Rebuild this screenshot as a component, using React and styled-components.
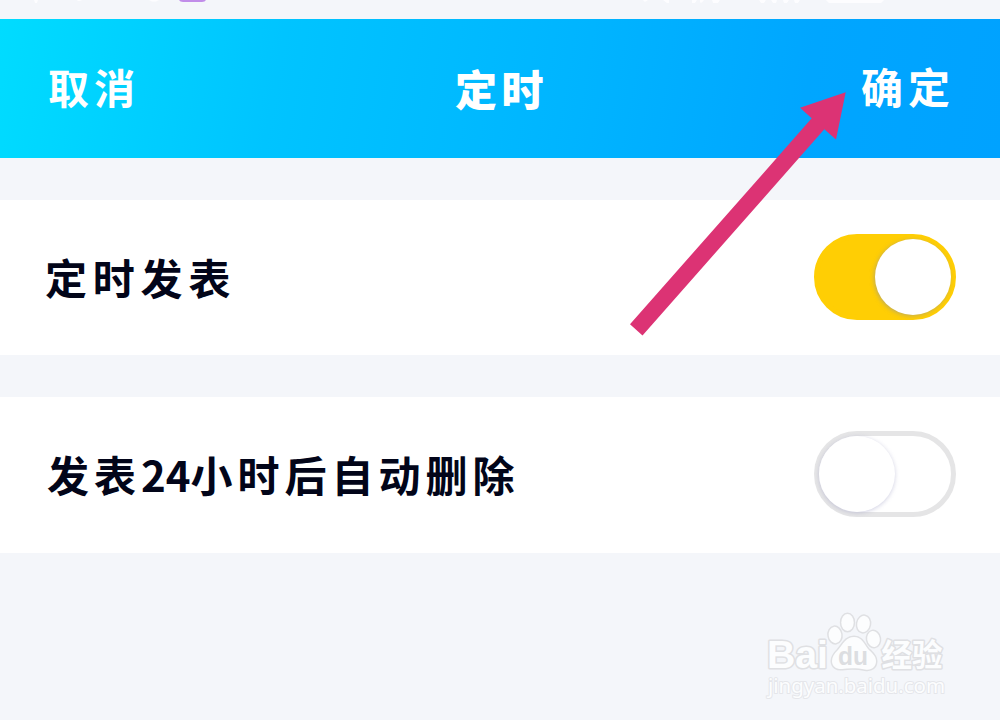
import styled, { createGlobalStyle } from "styled-components";

const rows = [
  { id: "schedule", label: "定时发表", on: true, inset: 45, pitch: 5.8 },
  {
    id: "autoDelete",
    label: (
      <>
        发表<Digits>24</Digits>小时后自动删除
      </>
    ),
    on: false,
    inset: 47,
    pitch: 5,
  },
];

const Switch = ({ on }) => (
  <Track $on={on} role="switch" aria-checked={on}>
    <Knob $on={on} />
  </Track>
);

function Digits({ children }) {
  return <DigitText>{children}</DigitText>;
}

const Watermark = () => (
  <WatermarkSvg width="190" height="96" viewBox="760 606 190 96">
    <g
      fill="#fcfdfe"
      stroke="#dfe0e3"
      strokeWidth="3"
      paintOrder="stroke"
      strokeLinejoin="round"
    >
      <ellipse cx="847.5" cy="622.5" rx="6.2" ry="8.5" />
      <ellipse cx="863.5" cy="624" rx="6.3" ry="8.2" transform="rotate(10 863.5 624)" />
      <ellipse cx="835" cy="635" rx="6.3" ry="8.2" transform="rotate(-8 835 635)" />
      <ellipse cx="873.5" cy="639" rx="6.3" ry="8" transform="rotate(-10 873.5 639)" />
      <path d="M854 637C846 637 843 644 838 650C834 654 832 657 832 661C832 667 837 669.5 842 669C849 668 858 668 865 669.5C872 670.5 876 667 876 661C876 656 872 653 868 649C864 644 862 637 854 637Z" />
      <BaiText x="767" y="668" textLength="61" lengthAdjust="spacingAndGlyphs">
        Bai
      </BaiText>
      <ZhText x="881.5" y="666" textLength="61" lengthAdjust="spacingAndGlyphs">
        经验
      </ZhText>
      <UrlText x="768" y="693" textLength="177" lengthAdjust="spacingAndGlyphs">
        jingyan.baidu.com
      </UrlText>
    </g>
    <DuText x="838" y="665" textLength="30" lengthAdjust="spacingAndGlyphs">
      du
    </DuText>
  </WatermarkSvg>
);

const App = () => {
  return (
    <Page>
      <GlobalStyle />
      <StatusStrip viewBox="0 0 1000 19" width="1000" height="19">
        <path
          d="M34 0h4l-1 3h-2zM77 0h5l-2 1h-2zM149 0h10l-3 1.5h-4zM643 0h5l-2 1.5h-2zM663 0h6v3h-2zM692 0h5l-2 3h-3zM700 0h4l-2 2.5h-2zM712 0h8l-2 3h-5zM759 0h7l-2 3h-3zM771 0h6l-1 3h-3zM783 0h6l-2 3h-3zM794 0h6l-2 3h-3zM826 0h58l-3 3h-52z"
          fill="#fdfdff"
        />
        <path d="M179 0h27q-1 2-4 2h-19q-3 0-4-2z" fill="#c18de9" />
      </StatusStrip>
      <Header>
        <HeaderAction>取消</HeaderAction>
        <Title>定时</Title>
        <HeaderAction>确定</HeaderAction>
      </Header>
      <Settings>
        {rows.map((row) => (
          <Row key={row.id} $inset={row.inset}>
            <Label $pitch={row.pitch}>{row.label}</Label>
            <Switch on={row.on} />
          </Row>
        ))}
      </Settings>
      <Arrow width="220" height="250" viewBox="628 90 220 250">
        <path
          d="M845.7 92.3L800 107.7L811.7 118.3L630 324.3L642.5 335.5L824.3 129.3L836 139.5Z"
          fill="#dc3374"
        />
      </Arrow>
      <Watermark />
    </Page>
  );
};

export default App;

const GlobalStyle = createGlobalStyle`
  body {
    margin: 0;
  }
`;

const Page = styled.div`
  position: relative;
  width: 1000px;
  height: 720px;
  overflow: hidden;
  background: #f4f6fa;
  font-family: "Noto Sans CJK SC", sans-serif;
`;

const StatusStrip = styled.svg`
  display: block;
`;

const Header = styled.header`
  display: grid;
  grid-template-columns: 1fr auto 1fr;
  align-items: center;
  box-sizing: border-box;
  height: 139px;
  padding: 0 45px 6px 48px;
  color: #fff;
  background: linear-gradient(100deg, #00dcff 0%, #00c4ff 28%, #00b4ff 58%, #00a6ff 80%, #00a2ff 100%);
`;

const HeaderAction = styled.span`
  font-size: 41px;
  font-weight: 700;
  line-height: 60px;
  letter-spacing: 5px;
  white-space: nowrap;

  &:last-child {
    justify-self: end;
    font-size: 42px;
  }
`;

const Title = styled.h1`
  margin: 4px 0 0;
  font-size: 42px;
  font-weight: 900;
  line-height: 60px;
  letter-spacing: 4.5px;
`;

const Settings = styled.main`
  display: flex;
  flex-direction: column;
  gap: 42px;
  margin-top: 42px;
`;

const Row = styled.div`
  display: flex;
  align-items: center;
  justify-content: space-between;
  box-sizing: border-box;
  height: 155px;
  padding: 0 44px 1px ${({ $inset }) => $inset}px;
  background: #fff;

  &:last-child {
    height: 156px;
    padding-bottom: 2px;
  }
`;

const Label = styled.span`
  padding-bottom: 1px;
  color: #020519;
  font-size: 42px;
  font-weight: 700;
  line-height: 60px;
  letter-spacing: ${({ $pitch }) => $pitch}px;
  white-space: nowrap;
`;

const DigitText = styled.span`
  letter-spacing: 0;
`;

const Track = styled.div`
  display: flex;
  align-items: center;
  justify-content: ${({ $on }) => ($on ? "flex-end" : "flex-start")};
  box-sizing: border-box;
  width: 142px;
  height: 86px;
  border: 5px solid ${({ $on }) => ($on ? "#ffce04" : "#e5e5e6")};
  border-radius: 43px;
  background: ${({ $on }) => ($on ? "#ffce04" : "#fff")};
`;

const Knob = styled.div`
  width: 76px;
  height: 76px;
  border-radius: 50%;
  background: #fff;
  box-shadow: ${({ $on }) =>
    $on
      ? "-1px 1px 4px rgba(150, 150, 150, 0.6)"
      : "0 1px 4px rgba(150, 150, 190, 0.45)"};
`;

const Arrow = styled.svg`
  position: absolute;
  left: 628px;
  top: 90px;
`;

const WatermarkSvg = styled.svg`
  position: absolute;
  left: 760px;
  top: 606px;
`;

const BaiText = styled.text`
  font: 700 38px "Liberation Sans", sans-serif;
`;

const DuText = styled.text`
  fill: #dcdee1;
  font: 700 25px "Liberation Sans", sans-serif;
`;

const ZhText = styled.text`
  font: 700 31px "Noto Sans CJK SC", sans-serif;
`;

const UrlText = styled.text`
  stroke: #e5e6ea;
  stroke-width: 2px;
  font: 400 20px "Noto Sans", sans-serif;
`;
